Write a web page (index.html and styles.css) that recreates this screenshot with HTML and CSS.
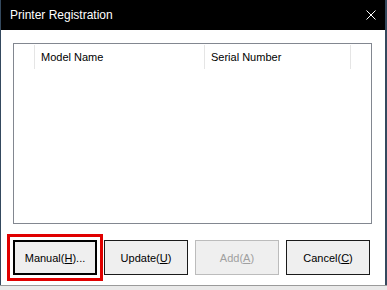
FILE: index.html
```html
<!DOCTYPE html>
<html lang="en">
<head>
  <meta charset="UTF-8">
  <title>Printer Registration</title>
  <link rel="stylesheet" href="styles.css">
</head>
<body>
  <div class="window">
    <div class="titlebar">
      <span class="title">Printer Registration</span>
      <svg class="close" width="10" height="10" viewBox="0 0 10 10">
        <path d="M0.5 0.5 L9.5 9.5 M9.5 0.5 L0.5 9.5" stroke="#fff" stroke-width="1"/>
      </svg>
    </div>

    <div class="content">
      <!-- Printer list -->
      <div class="listbox">
        <div class="list-header">
          <div class="col col-check"></div>
          <div class="col col-model">Model Name</div>
          <div class="col col-serial">Serial Number</div>
          <div class="col col-rest"></div>
        </div>
      </div>

      <!-- Buttons -->
      <div class="buttons">
        <button class="btn btn-default">Manual(<u>H</u>)...</button>
        <button class="btn">Update(<u>U</u>)</button>
        <button class="btn" disabled>Add(<u>A</u>)</button>
        <button class="btn">Cancel(<u>C</u>)</button>
      </div>
    </div>
  </div>
  <div class="desktop"></div>
</body>
</html>
```

FILE: styles.css
```css
/* Global */
body {
  margin: 0;
  padding: 0;
  background: #34495e;
  font-family: 'Liberation Sans', Arial, sans-serif;
  font-size: 11px;
  overflow: hidden;
}

/* Dialog window */
.window {
  width: 384px;
  height: 285px;
  margin-left: 1px;
  background: #fff;
}

/* Strip of desktop below the dialog */
.desktop {
  height: 5px;
  background: #e9e9e9;
  border-top: 1px solid #9a9a9a;
}

/* Title bar */
.titlebar {
  height: 30px;
  background: #000;
  color: #fff;
  display: flex;
  align-items: center;
  justify-content: space-between;
  padding: 0 9px 0 9px;
}
.title {
  font-family: 'Liberation Sans', Arial, sans-serif;
  font-size: 12px;
  padding-bottom: 1px;
}

/* Content */
.content {
  padding: 13px 13px 0 12px;
}

/* List box */
.listbox {
  height: 179px;
  border: 1px solid #828790;
}
.list-header {
  display: flex;
  height: 24px;
  padding-top: 1px;
}
.col {
  border-right: 1px solid #e5e5e5;
  padding-left: 6px;
  line-height: 24px;
  color: #000;
}
.col-check {
  width: 14px;
}
.col-model {
  width: 163px;
}
.col-serial {
  width: 139px;
}
.col-rest {
  border-right: none;
}

/* Buttons */
.buttons {
  display: flex;
  gap: 7px;
  margin-top: 16px;
}
.btn {
  width: 84px;
  height: 35px;
  background: #efefef;
  border: 1px solid #1a1a1a;
  border-radius: 0;
  font-family: 'Liberation Sans', Arial, sans-serif;
  font-size: 11px;
  color: #000;
  padding: 0;
}
.btn u {
  text-underline-offset: 1px;
}
.btn-default {
  border: 2px solid #000;
  outline: 3px solid #e00000;
  outline-offset: 3px;
}
.btn:disabled {
  border-color: #bcbcbc;
  color: #a0a0a0;
}
```
